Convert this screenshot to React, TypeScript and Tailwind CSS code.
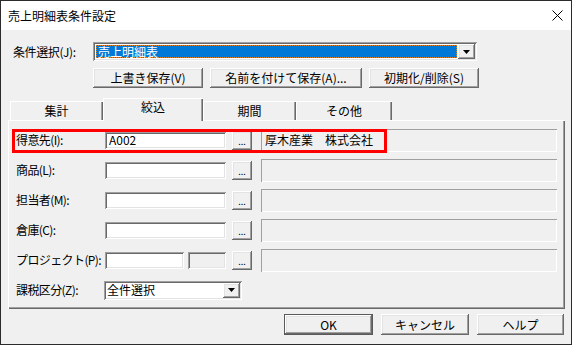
import React from 'react';

const sunken =
  'shadow-[inset_1px_1px_0_#a0a0a0,inset_-1px_-1px_0_#ffffff,inset_2px_2px_0_#696969,inset_-2px_-2px_0_#e3e3e3]';
const raised =
  'shadow-[inset_-1px_-1px_0_#696969,inset_1px_1px_0_#ffffff,inset_-2px_-2px_0_#a0a0a0,inset_2px_2px_0_#e3e3e3]';
const etched = 'shadow-[inset_1px_1px_0_#a0a0a0,inset_-1px_-1px_0_#ffffff]';

const DownArrow = () => (
  <svg width="7" height="4" viewBox="0 0 7 4">
    <path d="M0 0h7L3.5 4z" fill="#000" />
  </svg>
);

const Button = ({ label, w, def }: { label: string; w: string; def?: boolean }) => (
  <div
    className={`${w} h-full flex items-center justify-center bg-[#f0f0f0] ${raised} ${
      def ? 'border border-[#5a5a5a]' : ''
    }`}
  >
    {label}
  </div>
);

const DotsButton = () => (
  <div className={`w-[20px] h-[19px] bg-[#f0f0f0] ${raised} flex items-end justify-center pb-[4px] text-[9px] leading-none`}>
    ...
  </div>
);

const NameBox = ({ text }: { text?: string }) => (
  <div className={`w-[296px] h-[23px] ${etched} flex items-center pl-[4px]`}>{text}</div>
);

const Tab = ({ label, w, active }: { label: string; w: string; active?: boolean }) =>
  active ? (
    <div
      className={`${w} h-[23px] -mb-[1px] relative z-10 bg-[#f0f0f0] flex justify-center pt-[2px] shadow-[inset_1px_1px_0_#ffffff,inset_-1px_0_0_#696969,inset_-2px_0_0_#a0a0a0]`}
    >
      {label}
    </div>
  ) : (
    <div
      className={`${w} h-[19px] bg-[#f0f0f0] flex items-center justify-center shadow-[inset_1px_1px_0_#ffffff,inset_-1px_0_0_#696969,inset_-2px_0_0_#a0a0a0]`}
    >
      {label}
    </div>
  );

const Row = ({ label, children }: { label: string; children: React.ReactNode }) => (
  <div className="h-[30px] flex items-center">
    <div className="w-[89px] whitespace-nowrap tracking-[-0.6px]">{label}</div>
    {children}
  </div>
);

export default function App() {
  return (
    <div className="w-[572px] h-[345px] border border-[#2b2b2b] bg-[#f0f0f0] flex flex-col text-[12px] leading-[14px] text-black font-['Noto_Sans_CJK_JP','Noto_Sans',sans-serif]">
      {/* title bar */}
      <div className="h-[29px] bg-white flex items-center justify-between pl-[7px] pr-[8px]">
        <span>売上明細表条件設定</span>
        <svg width="11" height="11" viewBox="0 0 11 11">
          <path d="M0.5 0.5L10.5 10.5M10.5 0.5L0.5 10.5" stroke="#000" strokeWidth="1" />
        </svg>
      </div>

      {/* condition select */}
      <div className="mt-[12px] h-[19px] flex items-center pl-[12px]">
        <div className="w-[80px] tracking-[-0.4px]">条件選択(J):</div>
        <div className={`w-[384px] h-[19px] bg-white p-[2px] flex ${sunken}`}>
          <div className="flex-1 p-[1px]">
            <div className="h-full bg-[#0078d7] border border-dotted border-[#d9822b] text-white flex items-center pl-[1px]">
              売上明細表
            </div>
          </div>
          <div className={`w-[17px] h-full bg-[#f0f0f0] flex items-center justify-center ${raised}`}>
            <DownArrow />
          </div>
        </div>
      </div>

      {/* save buttons */}
      <div className="mt-[7px] h-[20px] flex pl-[92px] gap-[7px]">
        <Button label="上書き保存(V)" w="w-[110px]" />
        <Button label="名前を付けて保存(A)..." w="w-[152px]" />
        <Button label="初期化/削除(S)" w="w-[110px]" />
      </div>

      {/* tabs */}
      <div className="mt-[10px] h-[22px] flex items-end pl-[9px]">
        <Tab label="集計" w="w-[93px]" />
        <Tab label="絞込" w="w-[100px]" active />
        <Tab label="期間" w="w-[93px]" />
        <Tab label="その他" w="w-[96px]" />
      </div>

      {/* panel */}
      <div className="relative ml-[7px] w-[557px] h-[189px] pt-[5px] pl-[8px] shadow-[inset_1px_1px_0_#ffffff,inset_-1px_-1px_0_#696969,inset_-2px_-2px_0_#a0a0a0]">
        <Row label="得意先(I):">
          <div className={`w-[121px] h-[17px] bg-white ${sunken} flex items-center pl-[4px]`}>A002</div>
          <div className="ml-[6px]"><DotsButton /></div>
          <div className="ml-[9px]"><NameBox text="厚木産業　株式会社" /></div>
        </Row>
        <Row label="商品(L):">
          <div className={`w-[121px] h-[17px] bg-white ${sunken}`} />
          <div className="ml-[6px]"><DotsButton /></div>
          <div className="ml-[9px]"><NameBox /></div>
        </Row>
        <Row label="担当者(M):">
          <div className={`w-[121px] h-[17px] bg-white ${sunken}`} />
          <div className="ml-[6px]"><DotsButton /></div>
          <div className="ml-[9px]"><NameBox /></div>
        </Row>
        <Row label="倉庫(C):">
          <div className={`w-[121px] h-[17px] bg-white ${sunken}`} />
          <div className="ml-[6px]"><DotsButton /></div>
          <div className="ml-[9px]"><NameBox /></div>
        </Row>
        <Row label="プロジェクト(P):">
          <div className={`w-[79px] h-[17px] bg-white ${sunken}`} />
          <div className={`ml-[4px] w-[38px] h-[17px] bg-[#f0f0f0] ${sunken}`} />
          <div className="ml-[6px]"><DotsButton /></div>
          <div className="ml-[9px]"><NameBox /></div>
        </Row>
        <Row label="課税区分(Z):">
          <div className={`-ml-[1px] w-[138px] h-[19px] bg-white p-[2px] flex ${sunken}`}>
            <div className="flex-1 flex items-center pl-[1px]">全件選択</div>
            <div className={`w-[17px] h-full bg-[#f0f0f0] flex items-center justify-center ${raised}`}>
              <DownArrow />
            </div>
          </div>
        </Row>

        {/* highlight annotation */}
        <div className="absolute left-[4px] top-[9px] w-[375px] h-[24px] border-[3px] border-[#ff0000]" />
      </div>

      {/* dialog buttons */}
      <div className="mt-[5px] h-[21px] flex justify-end pr-[7px] gap-[8px]">
        <Button label="OK" w="w-[89px]" def />
        <Button label="キャンセル" w="w-[88px]" />
        <Button label="ヘルプ" w="w-[87px]" />
      </div>
    </div>
  );
}
